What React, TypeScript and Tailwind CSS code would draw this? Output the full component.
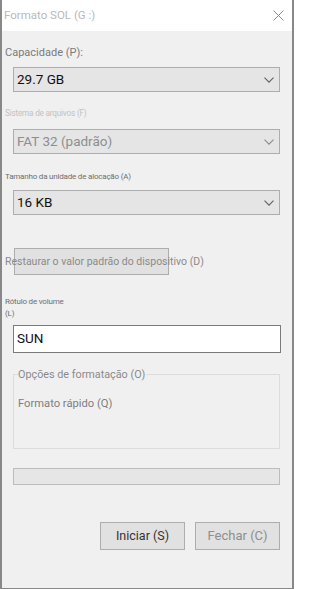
import React from 'react'

const font = { fontFamily: 'Roboto, "Liberation Sans", Arial, sans-serif' }

function Chevron({ color = '#606060' }: { color?: string }) {
  return (
    <svg width="10" height="6" viewBox="0 0 10 6" fill="none">
      <path d="M0.5 0.7l4.5 4.5L9.5 0.7" stroke={color} strokeWidth="1.1" />
    </svg>
  )
}

function Select({ value, disabled }: { value: string; disabled?: boolean }) {
  return (
    <div className="ml-[11px] w-[267px] h-[25px] flex items-center justify-between bg-[#e5e5e5] border border-[#adadad] pl-[3px] pr-[5px]">
      <span className={`text-[13.5px] leading-none ${disabled ? 'text-[#8e8e8e]' : 'text-[#111]'}`}>{value}</span>
      <Chevron color={disabled ? '#8a8a8a' : '#606060'} />
    </div>
  )
}

export default function App() {
  return (
    <div
      style={font}
      className="w-[294px] h-[589px] flex flex-col bg-[#f0f0f0] border-l-2 border-r-2 border-b border-[#888888]"
    >
      {/* Title bar */}
      <div className="h-[31px] shrink-0 bg-white flex items-center justify-between pl-[2px] pr-[8px]">
        <span className="text-[11.5px] text-[#b9b9b9]">Formato SOL (G :)</span>
        <svg width="11" height="11" viewBox="0 0 11 11" fill="none">
          <path d="M0.5 0.5l10 10M10.5 0.5l-10 10" stroke="#8a8a8a" strokeWidth="1" />
        </svg>
      </div>

      <div className="flex flex-col">
        <div className="mt-[15px] ml-[3px] h-[14px] text-[11px] leading-[14px] text-[#7a7a7a]">Capacidade (P):</div>
        <div className="mt-[7px]">
          <Select value="29.7 GB" />
        </div>

        <div className="mt-[16px] ml-[3px] h-[11px] text-[8.2px] tracking-[-0.2px] leading-[11px] text-[#c2c2c2]">
          Sistema de arquivos (F)
        </div>
        <div className="mt-[10px]">
          <Select value="FAT 32 (padrão)" disabled />
        </div>

        <div className="mt-[17px] ml-[3px] h-[11px] text-[8px] tracking-[-0.2px] leading-[11px] text-[#6e6e6e]">
          Tamanho da unidade de alocação (A)
        </div>
        <div className="mt-[8px]">
          <Select value="16 KB" />
        </div>

        {/* Restore button, its label runs past the box */}
        <div className="mt-[33px] h-[27px]">
          <div className="ml-[12px] w-[155px] h-[27px] bg-[#e1e1e1] border border-[#adadad]" />
          <div className="-mt-[27px] ml-[3px] h-[27px] leading-[27px] whitespace-nowrap text-[10.5px] text-[#8a8a8a]">
            Restaurar o valor padrão do dispositivo (D)
          </div>
        </div>

        <div className="mt-[21px] ml-[3px] text-[8px] tracking-[-0.2px] leading-[12px] text-[#6e6e6e]">
          <div>Rótulo de volume</div>
          <div>(L)</div>
        </div>
        <div className="mt-[5px] ml-[11px] w-[268px] h-[28px] bg-white border border-[#7a7a7a] flex items-center pl-[3px]">
          <span className="text-[13.5px] leading-none text-[#111]">SUN</span>
        </div>

        {/* Group box */}
        <div className="mt-[21px] ml-[11px] w-[267px] h-[75px] border border-[#dcdcdc] px-[4px]">
          <div className="-mt-[7px] w-fit bg-[#f0f0f0] text-[10.8px] leading-[13px] text-[#8a8a8a] pr-[1px]">
            Opções de formatação (O)
          </div>
          <div className="mt-[16px] text-[11.2px] leading-[14px] text-[#7e7e7e]">Formato rápido (Q)</div>
        </div>

        {/* Progress */}
        <div className="mt-[19px] ml-[11px] w-[267px] h-[17px] bg-[#e6e6e6] border border-[#bcbcbc]" />

        {/* Buttons */}
        <div className="mt-[37px] flex gap-[10px] ml-[98px]">
          <div className="w-[85px] h-[28px] bg-[#e1e1e1] border border-[#adadad] flex items-center justify-center text-[12.5px] text-[#333]">
            Iniciar (S)
          </div>
          <div className="w-[85px] h-[28px] bg-[#e1e1e1] border border-[#adadad] flex items-center justify-center text-[13px] text-[#8e8e8e]">
            Fechar (C)
          </div>
        </div>
      </div>
    </div>
  )
}
